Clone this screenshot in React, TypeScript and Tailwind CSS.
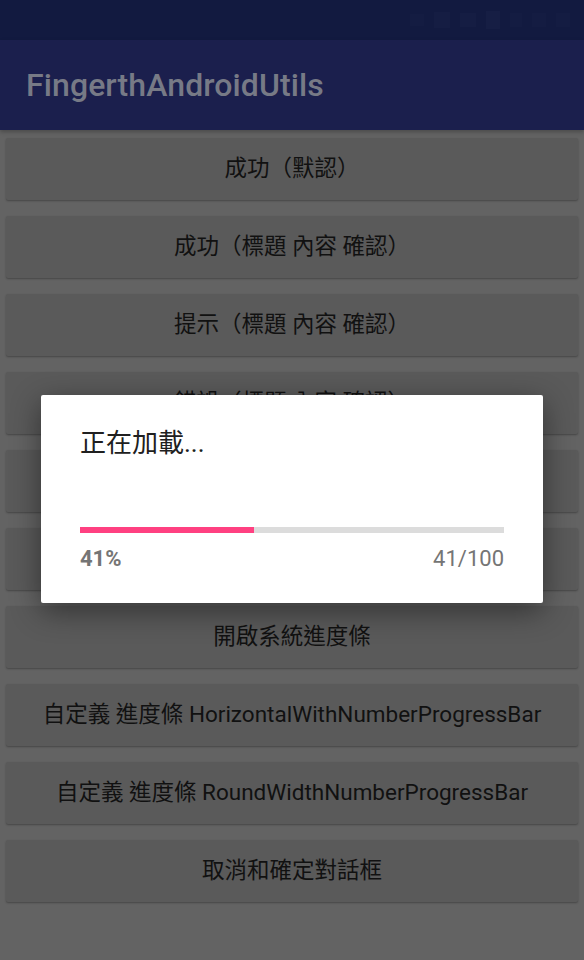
import React from "react";

const buttons = [
  "成功（默認）",
  "成功（標題 內容 確認）",
  "提示（標題 內容 確認）",
  "錯誤（標題 內容 確認）",
  "警告（標題 內容 確認）",
  "開啟自定義進度條",
  "開啟系統進度條",
  "自定義 進度條 HorizontalWithNumberProgressBar",
  "自定義 進度條 RoundWidthNumberProgressBar",
  "取消和確定對話框",
];

const font = { fontFamily: 'Roboto, "Noto Sans CJK TC", sans-serif' };

export default function App() {
  const progress = 41;
  return (
    <div className="relative w-[584px] h-[960px] overflow-hidden bg-[#636363]" style={font}>
      <div className="h-[40px] bg-[#121a40] flex items-center justify-end gap-[10px] pr-[14px]">
        <div className="w-[14px] h-[12px] bg-[#141c42]" />
        <div className="w-[16px] h-[16px] bg-[#151d43]" />
        <div className="w-[16px] h-[14px] bg-[#151d43]" />
        <div className="w-[14px] h-[18px] bg-[#161e44]" />
        <div className="w-[12px] h-[14px] bg-[#141c42]" />
        <div className="w-[14px] h-[14px] bg-[#141c42]" />
        <div className="w-[14px] h-[14px] bg-[#141c42]" />
      </div>
      <div className="h-[90px] bg-[#1b1f4d] flex items-center pl-[26px] shadow-[0_2px_4px_rgba(0,0,0,0.25)]">
        <span className="text-[32px] font-medium text-[#777a86] tracking-[0.1px]">FingerthAndroidUtils</span>
      </div>
      <div className="flex flex-col gap-[16px] px-[6px] pt-[8px]">
        {buttons.map((b) => (
          <div
            key={b}
            className="h-[62px] rounded-[2px] bg-[#5a5a5a] shadow-[0_1px_2px_rgba(0,0,0,0.3)] flex items-center justify-center text-[22.5px] text-[#111111] whitespace-nowrap"
          >
            {b}
          </div>
        ))}
      </div>
      <div className="absolute left-[41px] top-[395px] w-[502px] h-[208px] bg-white rounded-[2px] shadow-[0_8px_30px_rgba(0,0,0,0.45)] px-[39px] pt-[30px]">
        <div className="text-[26px] text-[#202020] leading-[36px]">正在加載...</div>
        <div className="mt-[66px] h-[6px] bg-[#dcdcdc] flex">
          <div className="h-full bg-[#ff4081]" style={{ width: `${progress}%` }} />
        </div>
        <div className="mt-[11px] flex justify-between items-center text-[22px] text-[#757575] leading-[30px]">
          <span className="font-bold">{progress}%</span>
          <span>{progress}/100</span>
        </div>
      </div>
    </div>
  );
}
